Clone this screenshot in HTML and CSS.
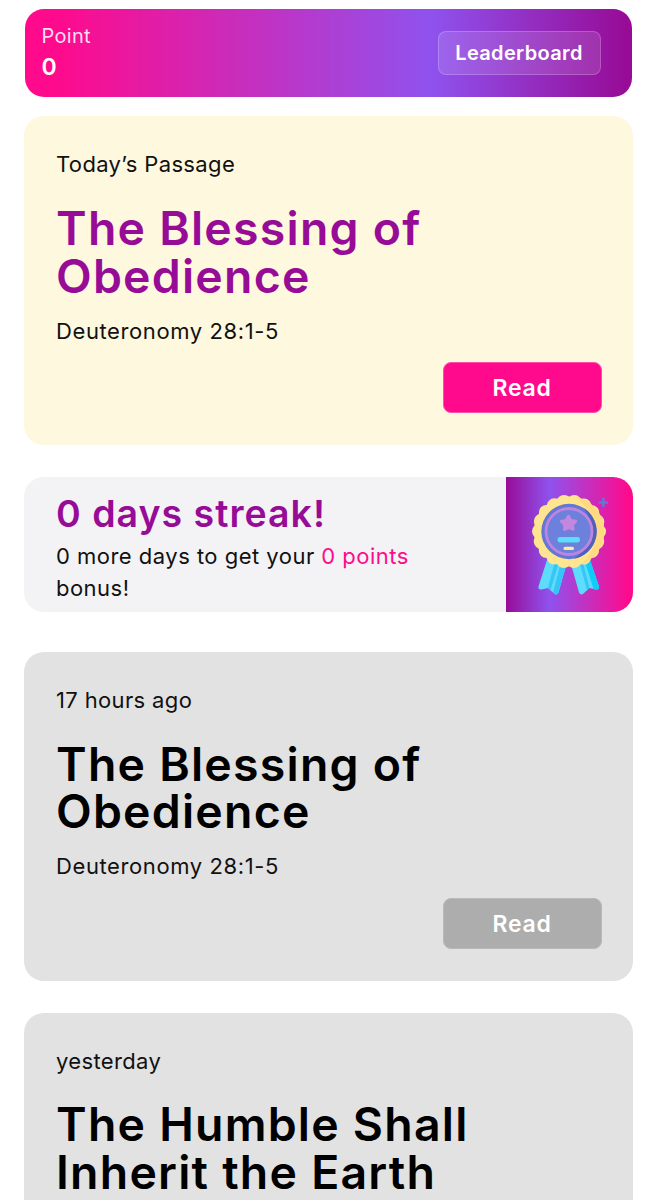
FILE: index.html
```html
<!DOCTYPE html>
<html lang="en">
<head>
    <meta charset="UTF-8" />
    <meta name="viewport" content="width=device-width, initial-scale=1.0" />
    <title>Today's Passage</title>
    <link rel="stylesheet" href="styles.css">
</head>
<body>
    <div class="header">
        <div class="points">
            <div class="points-label">Point</div>
            <div class="points-value">0</div>
        </div>
        <button class="leaderboard">Leaderboard</button>
    </div>

    <div class="card today">
        <p class="date">Today’s Passage</p>
        <h2>The Blessing of Obedience</h2>
        <p>Deuteronomy 28:1-5</p>
        <button class="read">Read</button>
    </div>

    <div class="streak">
        <div class="streak-text">
            <h3>0 days streak!</h3>
            <p>0 more days to get your <span class="bonus">0 points</span> bonus!</p>
        </div>
        <div class="streak-badge">
            <svg width="127" height="135" viewBox="0 0 127 135">
                <!-- ribbons -->
                <path d="M41 83 L32.5 109.500 Q32 113 35.500 112.500 L42 111 L48 116.500 Q51 119 52.500 115.500 L60 89 Z" fill="#5ddcfc" />
                <path d="M54 89 L47 115.600 L48 116.500 Q51 119 52.500 115.500 L60 89 Z" fill="#35c6f5" />
                <path d="M48.500 86 L42 111 L44.500 113.300 L52 88 Z" fill="#35c6f5" />
                <path d="M84 83 L93 109.500 Q93.500 113 90 112.500 L83.500 111 L77.500 116.500 Q74.500 119 73 115.500 L65.500 89 Z" fill="#5ddcfc" />
                <path d="M84 83 L93 109.500 Q93.500 113 90 112.500 L87.500 112 L79 85 Z" fill="#10ccfb" />
                <path d="M74 87 L81 113.300 L83.500 111 L77 86 Z" fill="#35c6f5" />
                <!-- rosette -->
                <circle cx="63" cy="54.500" r="35" fill="#ffe58f" />
                <circle class="scallops" cx="63" cy="54.500" r="29.500" stroke="#ffe58f" />
                <path d="M70 20 A35 35 0 0 1 73 88 C91 78 98 45 70 20 Z" fill="#ffda80" />
                <circle cx="63" cy="54.500" r="27.700" fill="#6278d5" />
                <path d="M78 31.200 A27.700 27.700 0 0 1 68 81.700 C88 69 90 48 78 31.200 Z" fill="#5360b8" />
                <circle cx="63" cy="54.500" r="23" fill="#6d80dc" stroke="#bd85df" stroke-width="2.800" />
                <path d="M62.500 39 L65 43.200 L70 44.100 L66.700 47.700 L67.300 52.500 L62.800 50.800 L58.300 52.700 L58.500 47.900 L55.200 44.300 L59.900 43.200 Z" fill="#c487df" stroke="#c487df" stroke-width="2.600" stroke-linejoin="round" />
                <rect x="51.500" y="60" width="22.500" height="5.500" rx="2.700" fill="#5ddcfc" />
                <rect x="57.500" y="69.800" width="10.500" height="3.200" rx="1.600" fill="#ffe99c" />
                <!-- sparkle -->
                <path d="M97.300 22 V29 M93.800 25.500 H100.800" stroke="#6278d5" stroke-width="2.600" stroke-linecap="round" />
            </svg>
        </div>
    </div>

    <div class="card">
        <p class="date">17 hours ago</p>
        <h2>The Blessing of Obedience</h2>
        <p>Deuteronomy 28:1-5</p>
        <button class="read">Read</button>
    </div>

    <div class="card">
        <p class="date">yesterday</p>
        <h2>The Humble Shall Inherit the Earth</h2>
    </div>
</body>
</html>
```
FILE: styles.css
```css
* {
    box-sizing: border-box;
}
body {
    font-family: Inter, "Liberation Sans", sans-serif;
    font-size: 22px;
    line-height: 32px;
    letter-spacing: 0.6px;
    color: #111;
    background-color: #fff;
    margin: 0;
    padding: 8.5px 24px 0;
    height: 1200px;
    overflow: hidden;
}
h2, h3, p {
    margin: 0;
}
button {
    font-family: inherit;
    font-weight: 600;
    color: white;
    padding: 0;
    cursor: pointer;
}
.header {
    display: flex;
    justify-content: space-between;
    align-items: center;
    height: 88.5px;
    margin: 0 1px 19.4px;
    padding: 0 31.5px 2px 16.5px;
    border-radius: 19px;
    color: white;
    background: linear-gradient(to right, #ff0a8c 5%, #8f52ee 67%, #970c97 99%);
}
.points-label {
    font-size: 20px;
    line-height: 31px;
    letter-spacing: 0.3px;
    color: #ffdcf3;
}
.points-value {
    font-size: 23px;
    line-height: 30px;
    font-weight: 600;
}
.leaderboard {
    width: 163px;
    height: 44px;
    margin-top: 2px;
    font-size: 20px;
    letter-spacing: 0.35px;
    background: rgba(255, 255, 255, 0.12);
    border: 1px solid rgba(255, 255, 255, 0.2);
    border-radius: 8px;
}
.card {
    display: flex;
    flex-direction: column;
    min-height: 328.4px;
    margin-bottom: 32px;
    padding: 32px;
    border-radius: 20px;
    background: #e2e2e2;
}
.card .date {
    letter-spacing: 0.36px;
}
.card h2 {
    margin: 24.6px 0 14.4px;
    font-size: 46.4px;
    line-height: 47.6px;
    font-weight: 600;
    letter-spacing: 1.25px;
    color: #000;
}
.read {
    align-self: flex-end;
    width: 159px;
    height: 51px;
    margin: 15.2px -0.6px 0 0;
    padding-top: 1px;
    font-size: 23px;
    letter-spacing: 0.8px;
    background: #adadad;
    border: 1px solid #b9b9b9;
    border-radius: 8px;
}
.today {
    background: #fef8df;
}
.today h2 {
    color: #970c97;
}
.today .read {
    background: #ff0a8c;
    border-color: #ff4fa9;
}
.streak {
    display: flex;
    height: 135px;
    margin-bottom: 40.4px;
    border-radius: 20px;
    overflow: hidden;
    background: #f3f3f6;
}
.streak-text {
    flex: 1;
    padding: 12.4px 32px 0;
}
.streak-text h3 {
    font-size: 37.5px;
    line-height: 50.6px;
    font-weight: 600;
    letter-spacing: 1px;
    color: #970c97;
}
.streak-text p {
    letter-spacing: 0.48px;
}
.bonus {
    color: #ff0a8c;
}
.streak-badge {
    width: 127px;
    background: linear-gradient(to right, #970c97 0%, #8f52ee 34%, #ff0a8c 97%);
}
.streak-badge svg {
    display: block;
}
.scallops {
    fill: none;
    stroke-width: 15;
    stroke-linecap: round;
    stroke-dasharray: 0 10.297;
}
```
